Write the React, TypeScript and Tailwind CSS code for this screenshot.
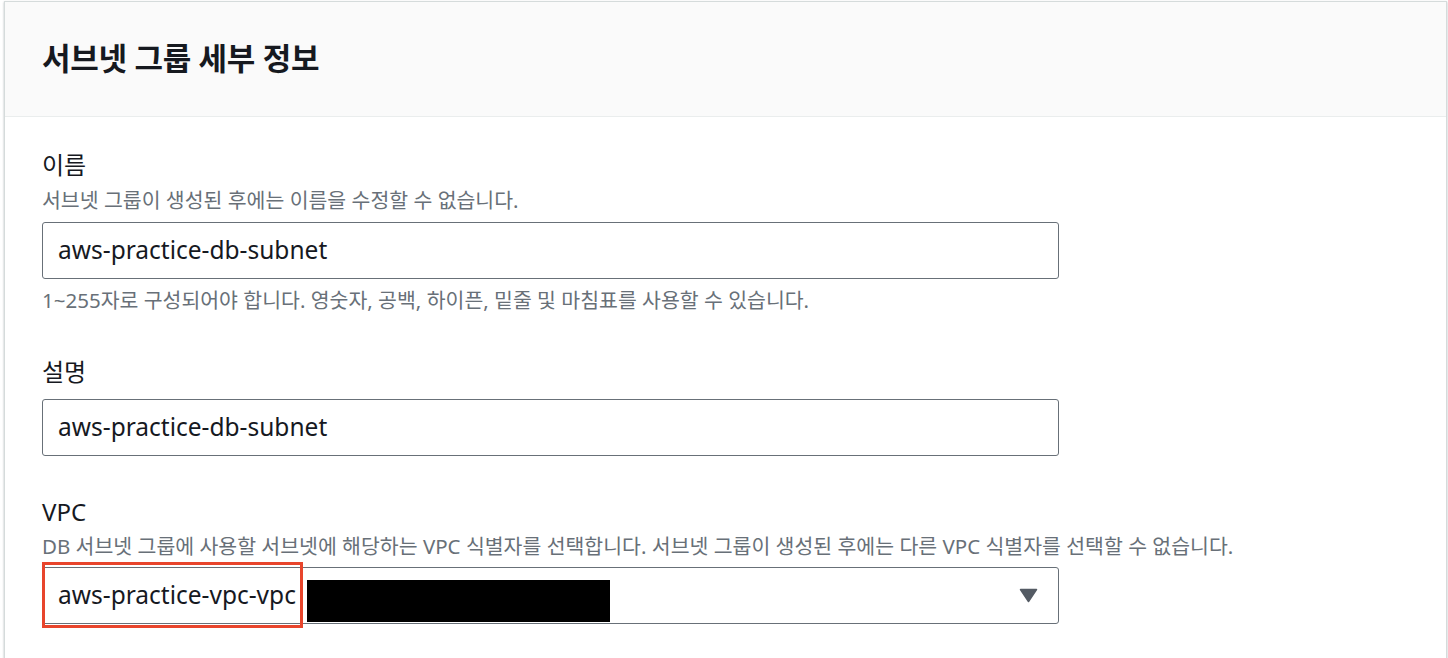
import React from "react";

const font = { fontFamily: '"Noto Sans", "Noto Sans CJK KR", sans-serif' };

const inputCls =
  "w-[1017px] h-[57px] border border-[#687078] rounded-[3px] flex items-center px-[15px] text-[24.5px] text-[#16191f]";

export default function App() {
  return (
    <div className="w-[1448px] h-[658px] bg-white overflow-hidden pl-[4px] pt-[1px] pr-[1px]" style={font}>
      <div className="h-full border-l border-t border-r border-[#d5dbdb] shadow-[0_1px_2px_rgba(0,28,36,0.3)] bg-white">
        {/* 헤더 */}
        <div className="h-[115px] bg-[#fafafa] border-b border-[#eaeded] flex items-center px-[37px]">
          <h2 className="text-[31px] font-bold text-[#16191f] tracking-[-0.3px] -mt-[2px]">서브넷 그룹 세부 정보</h2>
        </div>

        <div className="px-[37px] pt-[32px] flex flex-col">
          {/* 이름 */}
          <div className="text-[24px] leading-[32px] text-[#16191f]">이름</div>
          <div className="text-[20.5px] leading-[28px] text-[#687078] mt-[5px]">
            서브넷 그룹이 생성된 후에는 이름을 수정할 수 없습니다.
          </div>
          <div className={inputCls + " mt-[8px]"}>aws-practice-db-subnet</div>
          <div className="text-[20.5px] leading-[28px] text-[#687078] mt-[7px]">
            1~255자로 구성되어야 합니다. 영숫자, 공백, 하이픈, 밑줄 및 마침표를 사용할 수 있습니다.
          </div>

          {/* 설명 */}
          <div className="text-[24px] leading-[32px] text-[#16191f] mt-[42px]">설명</div>
          <div className={inputCls + " mt-[11px]"}>aws-practice-db-subnet</div>

          {/* VPC */}
          <div className="text-[24px] leading-[32px] text-[#16191f] mt-[40px]">VPC</div>
          <div className="text-[20.5px] leading-[28px] text-[#687078] mt-[4px]">
            DB 서브넷 그룹에 사용할 서브넷에 해당하는 VPC 식별자를 선택합니다. 서브넷 그룹이 생성된 후에는 다른 VPC 식별자를 선택할 수 없습니다.
          </div>
          <div className="relative w-[1017px] h-[57px] border border-[#687078] rounded-[3px] flex items-center pl-[15px] pr-[20px] text-[24.5px] text-[#16191f] mt-[7px]">
            <span className="whitespace-nowrap">aws-practice-vpc-vpc</span>
            <svg className="ml-auto" width="19" height="15" viewBox="0 0 19 15">
              <path d="M1.5 1.5 H17.5 L9.5 13.5 Z" fill="#545b64" stroke="#545b64" strokeLinejoin="round" strokeWidth="1.5" />
            </svg>
            {/* 가림 처리 */}
            <div className="absolute left-[264px] top-[12px] w-[303px] h-[42px] bg-black" />
            <div className="absolute left-[-1px] top-[-6px] w-[261px] h-[66px] border-[3px] border-[#e8452c]" />
          </div>
        </div>
      </div>
    </div>
  );
}
